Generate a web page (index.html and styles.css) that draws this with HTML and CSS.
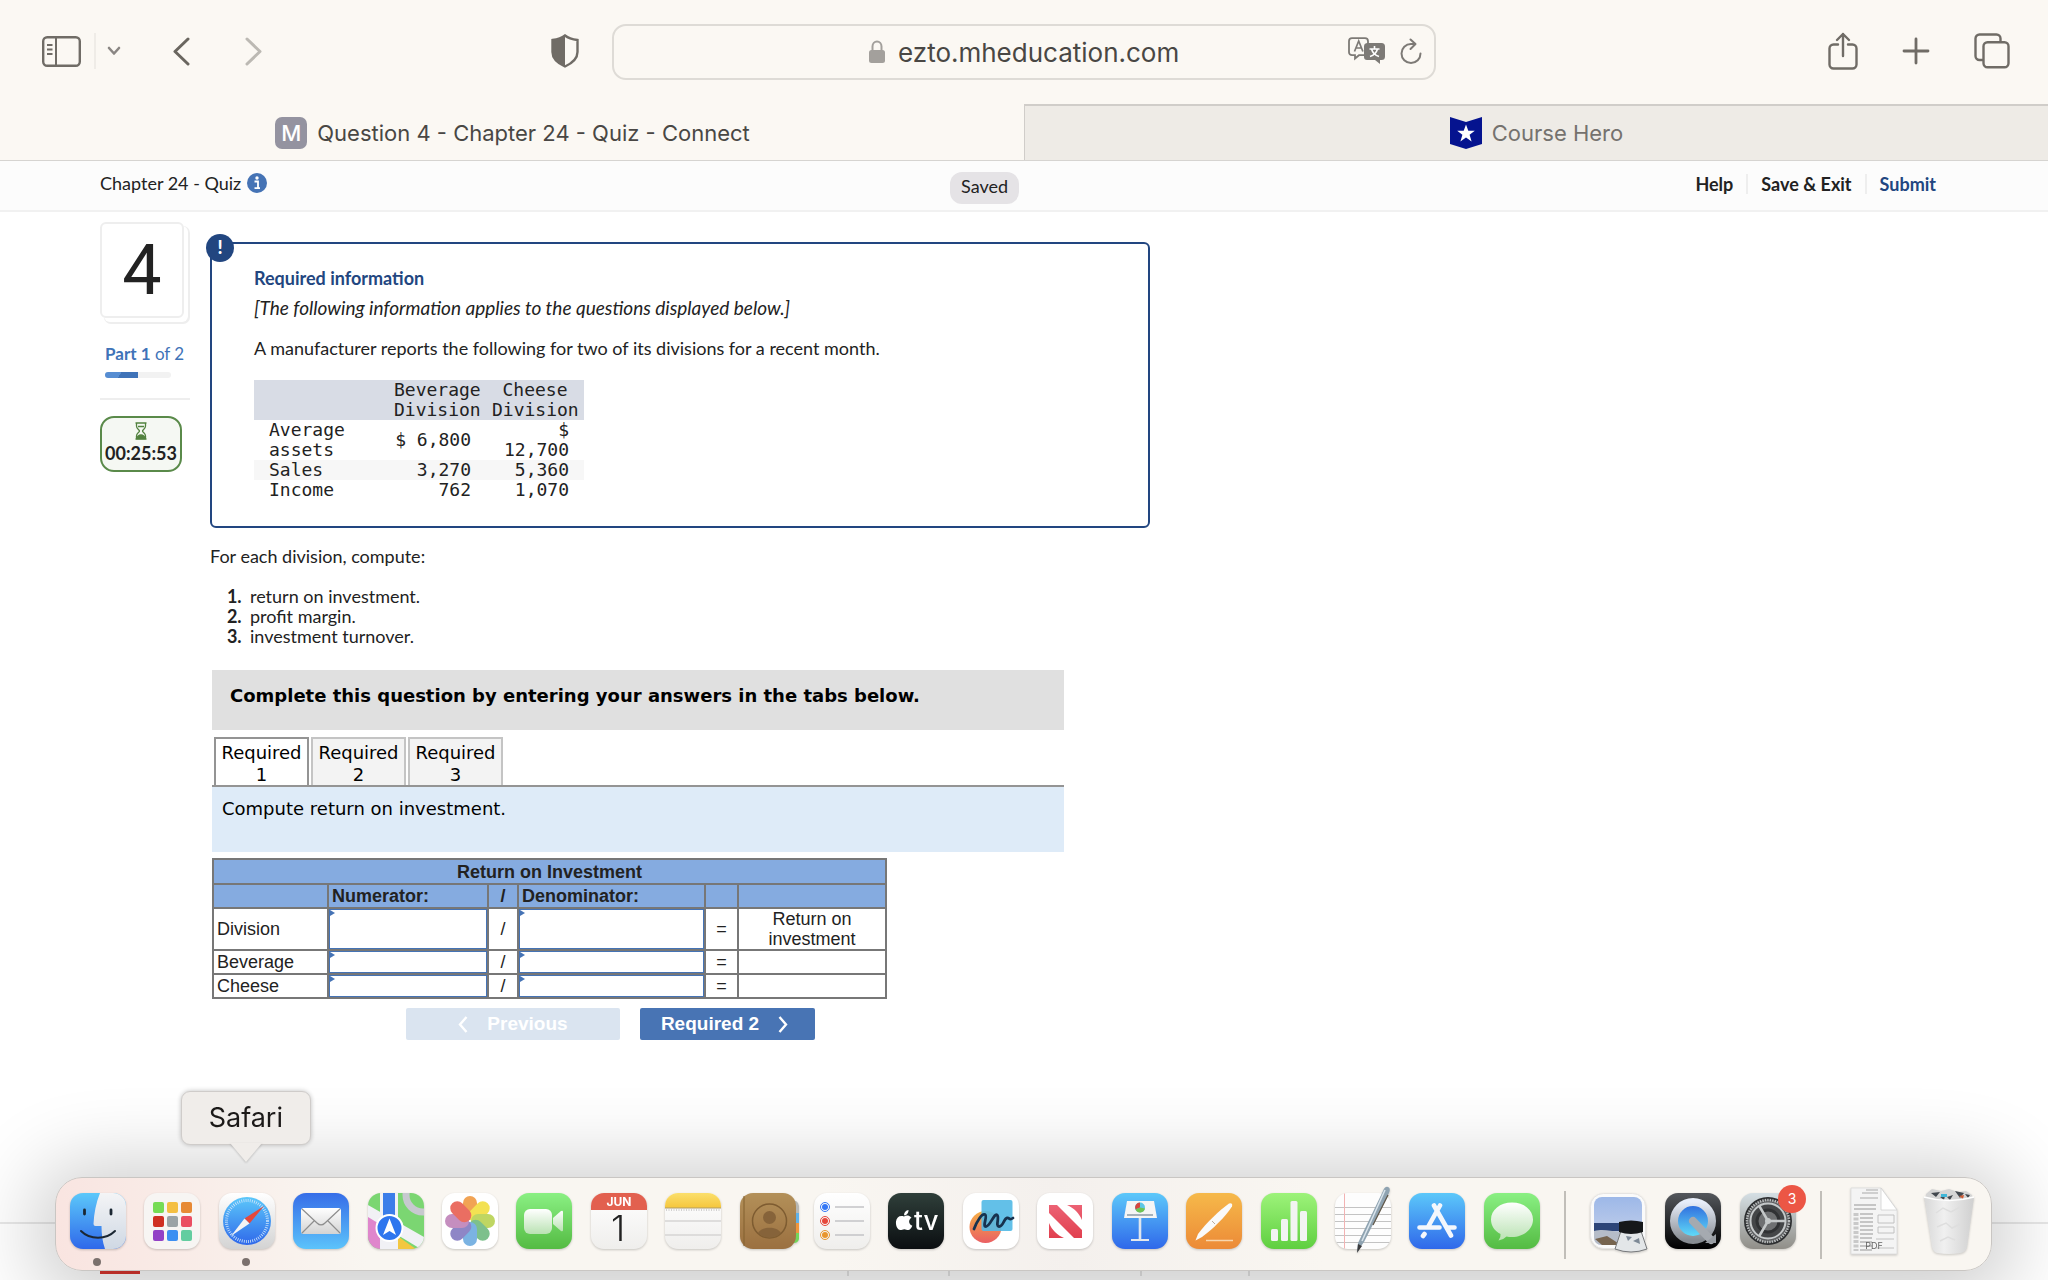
FILE: index.html
```
<!DOCTYPE html>
<html lang="en">
<head>
    <meta charset="UTF-8">
    <title>Question 4 - Chapter 24 - Quiz - Connect</title>
    <meta name="viewport" content="width=device-width, initial-scale=1">
    <link rel="stylesheet" href="styles.css">
</head>
<body>

<!-- browser -->
<header class="browser">
    <div class="toolbar">
        <div class="tools tools_left">
            <button type="button" class="icon_btn" aria-label="Sidebar">
                <svg width="39" height="31" viewBox="0 0 39 31" fill="none" stroke="#706c66" stroke-width="2.4"><rect x="1.2" y="1.2" width="36.6" height="28.6" rx="4"/><path d="M14 1v29M5 9h5.500M5 13.500h5.500M5 18h5.500" stroke-width="2"/></svg>
            </button>
            <span class="tool_line"></span>
            <button type="button" class="icon_btn" aria-label="Tab groups">
                <svg width="14" height="10" viewBox="0 0 14 10" fill="none" stroke="#8a8683" stroke-width="2.600" stroke-linecap="round" stroke-linejoin="round"><path d="M2 2l5 5.500L12 2"/></svg>
            </button>
            <button type="button" class="icon_btn back" aria-label="Back">
                <svg width="17" height="29" viewBox="0 0 17 29" fill="none" stroke="#6a665f" stroke-width="3" stroke-linecap="round" stroke-linejoin="round"><path d="M15 2L2 14.500L15 27"/></svg>
            </button>
            <button type="button" class="icon_btn forward" aria-label="Forward">
                <svg width="17" height="29" viewBox="0 0 17 29" fill="none" stroke="#bcb9b3" stroke-width="3" stroke-linecap="round" stroke-linejoin="round"><path d="M2 2l13 12.500L2 27"/></svg>
            </button>
            <button type="button" class="icon_btn shield" aria-label="Privacy report">
                <svg width="28" height="34" viewBox="0 0 28 34"><path d="M14 1.500C17 4 22 5.500 26.500 6v12c0 7-6 11.500-12.500 14.500C7.500 29.500 1.500 25 1.500 18V6C6 5.500 11 4 14 1.500z" fill="none" stroke="#706c66" stroke-width="2.400"/><path d="M14 1.500v31C7.500 29.500 1.500 25 1.500 18V6C6 5.500 11 4 14 1.500z" fill="#706c66"/></svg>
            </button>
        </div>
        <div class="url">
            <div class="url_field">
                <svg width="18" height="24" viewBox="0 0 18 24"><rect x="1" y="10" width="16" height="13" rx="2.500" fill="#a3a09c"/><path d="M4.500 11V6.500a4.500 5 0 0 1 9 0V11" fill="none" stroke="#a3a09c" stroke-width="2"/></svg>
                <input type="text" aria-label="Address" value="ezto.mheducation.com">
            </div>
            <div class="url_icons">
                <button type="button" class="icon_btn" aria-label="Translate">
                    <svg width="38" height="28" viewBox="0 0 38 28"><path d="M4 1.200h13a3 3 0 0 1 3 3v11a3 3 0 0 1-3 3h-6l-4 3.300v-3.300H4a3 3 0 0 1-3-3v-11a3 3 0 0 1 3-3z" fill="none" stroke="#7d7a76" stroke-width="1.800"/><path d="M6.500 14.500L10.700 4l4.200 10.500M8 11h5.500" fill="none" stroke="#7d7a76" stroke-width="1.700"/><path d="M19 6h14.500a3.500 3.500 0 0 1 3.500 3.500v10a3.500 3.500 0 0 1-3.500 3.500H32v4l-5-4h-8a3 3 0 0 1-3-3V9.500A3.500 3.500 0 0 1 19 6z" fill="#7d7a76"/><path d="M21.500 12h10M26.500 9v3M29.500 12c-1 3.500-4 6.500-7.500 7.500M23.500 12c1 3.500 4 6.500 7.500 7.500" fill="none" stroke="#fff" stroke-width="1.600"/></svg>
                </button>
                <button type="button" class="icon_btn" aria-label="Reload">
                    <svg width="22" height="26" viewBox="0 0 22 26" fill="none" stroke="#7d7a76" stroke-width="2" stroke-linecap="round" stroke-linejoin="round"><path d="M15 6H11a9.500 9.500 0 1 0 9.500 9.500M10.500 1.500L15.500 6L10.500 11"/></svg>
                </button>
            </div>
        </div>
        <div class="tools tools_right">
            <button type="button" class="icon_btn" aria-label="Share">
                <svg width="30" height="38" viewBox="0 0 30 38" fill="none" stroke="#706c66" stroke-width="2.400" stroke-linecap="round" stroke-linejoin="round"><path d="M10 12.500H5.500A4 4 0 0 0 1.500 16.500V32.500a4 4 0 0 0 4 4h19a4 4 0 0 0 4-4v-16a4 4 0 0 0-4-4H20M15 24V2M9 8l6-6l6 6"/></svg>
            </button>
            <button type="button" class="icon_btn" aria-label="New tab">
                <svg width="28" height="28" viewBox="0 0 28 28" fill="none" stroke="#706c66" stroke-width="2.800" stroke-linecap="round"><path d="M14 2v24M2 14h24"/></svg>
            </button>
            <button type="button" class="icon_btn" aria-label="Tab overview">
                <svg width="36" height="36" viewBox="0 0 36 36" fill="none" stroke="#706c66" stroke-width="2.400"><path d="M9 27H5.500a4 4 0 0 1-4-4V5.500a4 4 0 0 1 4-4H22.500a4 4 0 0 1 4 4V9"/><rect x="9.500" y="9.200" width="25" height="25" rx="4"/></svg>
            </button>
        </div>
    </div>
    <nav class="browser_tabs">
        <a href="#" class="browser_tab active"><span class="m_icon">M</span>Question 4 - Chapter 24 - Quiz - Connect</a>
        <a href="#" class="browser_tab">
            <svg width="32" height="32" viewBox="0 0 32 32"><path d="M0 0l16 5L32 0v27l-16 5l-16-5z" fill="#05138f"/><path d="M16 7.500l2.300 6.300h6.500l-5.200 4l2 6.600L16 20.500l-5.600 3.900l2-6.600l-5.200-4h6.500z" fill="#fff"/></svg>Course Hero</a>
    </nav>
</header>

<!-- quiz -->
<div class="quiz_header">
    <div class="quiz_name">Chapter 24 - Quiz
        <svg width="20" height="20" viewBox="0 0 20 20"><circle cx="10" cy="10" r="10" fill="#4573b5"/><circle cx="10" cy="5" r="1.700" fill="#fff"/><path d="M7.500 8.500h3.500v6.500M7.500 15.200h5.500" fill="none" stroke="#fff" stroke-width="1.800"/></svg>
    </div>
    <span class="saved">Saved</span>
    <nav class="quiz_links">
        <a href="#">Help</a>
        <a href="#">Save &amp; Exit</a>
        <a href="#" class="submit">Submit</a>
    </nav>
</div>

<main>
    <aside>
        <div class="number">4</div>
        <div class="part"><b>Part 1</b> of 2</div>
        <div class="progress"><div class="progress_done"></div></div>
        <div class="timer">
            <svg width="12" height="18" viewBox="0 0 12 18" fill="none" stroke="#52823f" stroke-width="1.300"><path d="M.5 1h11M.5 17h11M1.500 1v3c0 3 3 3.500 3 5s-3 2-3 5v3M10.500 1v3c0 3-3 3.500-3 5s3 2 3 5v3M3 4.500h6"/><path d="M2 16.500c0-2 2-3.500 4-3.500s4 1.500 4 3.500z" fill="#52823f"/></svg>
            <b>00:25:53</b>
        </div>
    </aside>

    <article>
        <section class="required_info">
            <span class="alert">!</span>
            <h2>Required information</h2>
            <p class="applies"><i>[The following information applies to the questions displayed below.]</i></p>
            <p class="reports">A manufacturer reports the following for two of its divisions for a recent month.</p>
            <table class="divisions">
                <thead>
                <tr><th></th><th>Beverage Division</th><th>Cheese Division</th></tr>
                </thead>
                <tbody>
                <tr><td>Average assets</td><td>$ 6,800</td><td>$ 12,700</td></tr>
                <tr class="shade"><td>Sales</td><td>3,270</td><td>5,360</td></tr>
                <tr><td>Income</td><td>762</td><td>1,070</td></tr>
                </tbody>
            </table>
        </section>

        <p class="compute">For each division, compute:</p>
        <ol>
            <li>return on investment.</li>
            <li>profit margin.</li>
            <li>investment turnover.</li>
        </ol>

        <section class="worksheet">
            <div class="instruction">Complete this question by entering your answers in the tabs below.</div>
            <div class="tabs">
                <button type="button" class="tab active">Required 1</button>
                <button type="button" class="tab">Required 2</button>
                <button type="button" class="tab">Required 3</button>
            </div>
            <div class="task">Compute return on investment.</div>

            <table class="answers">
                <colgroup>
                    <col class="col_name"><col class="col_num"><col class="col_slash"><col class="col_den"><col class="col_eq"><col class="col_result">
                </colgroup>
                <thead>
                <tr class="title"><th colspan="6" class="center">Return on Investment</th></tr>
                <tr><th></th><th>Numerator:</th><th class="center">/</th><th>Denominator:</th><th></th><th></th></tr>
                </thead>
                <tbody>
                <tr class="tall">
                    <td>Division</td>
                    <td class="entry"><input type="text" aria-label="Division numerator"></td>
                    <td class="center">/</td>
                    <td class="entry"><input type="text" aria-label="Division denominator"></td>
                    <td class="center">=</td>
                    <td class="center">Return on investment</td>
                </tr>
                <tr>
                    <td>Beverage</td>
                    <td class="entry"><input type="text" aria-label="Beverage numerator"></td>
                    <td class="center">/</td>
                    <td class="entry"><input type="text" aria-label="Beverage denominator"></td>
                    <td class="center">=</td>
                    <td></td>
                </tr>
                <tr>
                    <td>Cheese</td>
                    <td class="entry"><input type="text" aria-label="Cheese numerator"></td>
                    <td class="center">/</td>
                    <td class="entry"><input type="text" aria-label="Cheese denominator"></td>
                    <td class="center">=</td>
                    <td></td>
                </tr>
                </tbody>
            </table>

            <div class="pager">
                <button type="button" class="previous" disabled>
                    <svg width="10" height="17" viewBox="0 0 10 17" fill="none" stroke="#fff" stroke-width="2.400"><path d="M8.500 1L2 8.500L8.500 16"/></svg>Previous</button>
                <button type="button" class="next">Required 2
                    <svg width="10" height="17" viewBox="0 0 10 17" fill="none" stroke="#fff" stroke-width="2.400"><path d="M1.500 1L8 8.500L1.500 16"/></svg></button>
            </div>
        </section>
    </article>
</main>

<footer>
    <div class="logo"></div>
    <span class="w707"></span><span class="w100"></span><span class="w192"></span><span class="w107"></span>
</footer>

<!-- dock -->
<svg class="defs" width="0" height="0">
    <defs>
        <linearGradient id="blue" x2="0" y2="1"><stop stop-color="#5cc8fa"/><stop offset="1" stop-color="#2f68ea"/></linearGradient>
        <linearGradient id="blueUp" x2="0" y2="1"><stop stop-color="#366de8"/><stop offset="1" stop-color="#5cc3fb"/></linearGradient>
        <linearGradient id="green" x2="0" y2="1"><stop stop-color="#8af083"/><stop offset="1" stop-color="#54bb43"/></linearGradient>
        <linearGradient id="lime" x2="0" y2="1"><stop stop-color="#9df37a"/><stop offset="1" stop-color="#5fcf40"/></linearGradient>
        <linearGradient id="white" x2="0" y2="1"><stop stop-color="#fff"/><stop offset="1" stop-color="#efeeec"/></linearGradient>
        <linearGradient id="silver" x2="0" y2="1"><stop stop-color="#fff"/><stop offset="1" stop-color="#d3d3d3"/></linearGradient>
        <linearGradient id="glass" x2="0" y2="1"><stop stop-color="#fff"/><stop offset="1" stop-color="#b9e2b2"/></linearGradient>
        <linearGradient id="face" x2="0" y2="1"><stop stop-color="#f4f4f6"/><stop offset="1" stop-color="#cfd8e4"/></linearGradient>
        <linearGradient id="yellow" x2="0" y2="1"><stop stop-color="#fbdf6c"/><stop offset="1" stop-color="#f5c63c"/></linearGradient>
        <linearGradient id="orange" x2="0" y2="1"><stop stop-color="#f6b94a"/><stop offset="1" stop-color="#ec8a37"/></linearGradient>
        <linearGradient id="brown" x2="0" y2="1"><stop stop-color="#b39059"/><stop offset="1" stop-color="#9b7040"/></linearGradient>
        <linearGradient id="black" x2="0" y2="1"><stop stop-color="#2f3f3a"/><stop offset="1" stop-color="#0b0e11"/></linearGradient>
        <linearGradient id="dark" x2="0" y2="1"><stop stop-color="#54575c"/><stop offset="1" stop-color="#000"/></linearGradient>
        <linearGradient id="gray" x2="0" y2="1"><stop stop-color="#d5dfe4"/><stop offset="1" stop-color="#908e88"/></linearGradient>
        <linearGradient id="coral" x2="0" y2="1"><stop stop-color="#f5b046"/><stop offset="1" stop-color="#ea5f63"/></linearGradient>
        <linearGradient id="red" x2="0" y2="1"><stop stop-color="#ec6274"/><stop offset="1" stop-color="#e1404f"/></linearGradient>
        <linearGradient id="ring" x2="0" y2="1"><stop stop-color="#e8eefa"/><stop offset="1" stop-color="#878c92"/></linearGradient>
        <linearGradient id="aqua" x2="0" y2="1"><stop stop-color="#2b63dc"/><stop offset="1" stop-color="#66e8fa"/></linearGradient>
        <linearGradient id="sky" x2="0" y2="1"><stop stop-color="#9db8e8"/><stop offset="1" stop-color="#c9d3ea"/></linearGradient>
        <linearGradient id="bin" x2="1" y2="0"><stop stop-color="#d8d8d8"/><stop offset=".4" stop-color="#f2f2f2"/><stop offset="1" stop-color="#cfcfcf"/></linearGradient>
        <clipPath id="app"><rect width="56" height="56" rx="13"/></clipPath>
    </defs>
</svg>

<nav class="dock" aria-label="Dock">
    <div class="apps apps_main">
        <a href="#" class="app running" aria-label="Finder">
            <svg viewBox="0 0 56 56"><g clip-path="url(#app)"><rect width="56" height="56" fill="url(#blue)"/><path d="M30 0C26 10 24 20 23.500 31q0 2 2 2h6c0 8 1 16 3.500 23h21V0z" fill="url(#face)"/></g><path d="M14.500 17v4M41 17v4" stroke="#1b2733" stroke-width="2.800" stroke-linecap="round"/><path d="M11 38c9 9 25 9 34 0" fill="none" stroke="#1b2733" stroke-width="2" stroke-linecap="round"/></svg>
        </a>
        <a href="#" class="app" aria-label="Launchpad">
            <svg viewBox="0 0 56 56"><rect width="56" height="56" rx="13" fill="#f7f5f3"/><rect x="9" y="9" width="11" height="11" rx="2" fill="#76dc55"/><rect x="23" y="9" width="11" height="11" rx="2" fill="#f4bf42"/><rect x="37" y="9" width="11" height="11" rx="2" fill="#e78a35"/><rect x="9" y="23" width="11" height="11" rx="2" fill="#cf3023"/><rect x="23" y="23" width="11" height="11" rx="2" fill="#9aa3a6"/><rect x="37" y="23" width="11" height="11" rx="2" fill="#ea4e62"/><rect x="9" y="37" width="11" height="11" rx="2" fill="#9241c6"/><rect x="23" y="37" width="11" height="11" rx="2" fill="#3d8ff2"/><rect x="37" y="37" width="11" height="11" rx="2" fill="#63cda0"/></svg>
        </a>
        <a href="#" class="app running" aria-label="Safari">
            <span class="tooltip">Safari</span>
            <svg viewBox="0 0 56 56"><rect width="56" height="56" rx="13" fill="url(#silver)"/><circle cx="28" cy="28" r="24" fill="url(#blue)"/><circle cx="28" cy="28" r="20.500" fill="none" stroke="#cfe5fb" stroke-width="3" stroke-dasharray=".8 1.350"/><path d="M45 13L25.500 25.500l5 5z" fill="#e5483c"/><path d="M12 43l13.500-17.500l5 5z" fill="#f4f4f4"/></svg>
        </a>
        <a href="#" class="app" aria-label="Mail">
            <svg viewBox="0 0 56 56"><rect width="56" height="56" rx="13" fill="url(#blueUp)"/><rect x="8" y="15" width="40" height="26" rx="2.500" fill="url(#silver)"/><path d="M9 16l15 14q4 4 8 0l15-14M9 40l12-12M47 40L35 28" fill="none" stroke="#8e8e8e" stroke-width="1.200"/></svg>
        </a>
        <a href="#" class="app" aria-label="Maps">
            <svg viewBox="0 0 56 56"><g clip-path="url(#app)"><rect width="56" height="56" fill="#7bd672"/><path d="M0 20l13 10v26H0z" fill="#df86cc"/><path d="M0 12l56 32v14L0 24z" fill="#f1f1f5"/><path d="M28 56V42l20 14z" fill="#f3c740"/><rect x="12" width="18" height="56" fill="#f1f1f5"/><rect x="15" width="12" height="34" fill="#3b7de9"/><circle cx="55" cy="2" r="17" fill="none" stroke="#c7c9cf" stroke-width="7"/></g><circle cx="21.500" cy="35" r="13" fill="#2f76ee" stroke="#fff" stroke-width="2"/><path d="M21.500 25.500L28 42l-6.500-4l-6.500 4z" fill="#fff"/></svg>
        </a>
        <a href="#" class="app" aria-label="Photos">
            <svg viewBox="0 0 56 56"><rect width="56" height="56" rx="13" fill="#fff"/><g opacity=".85"><rect x="21" y="3" width="14" height="24" rx="7" fill="#ef9437"/><rect x="21" y="3" width="14" height="24" rx="7" fill="#f2dc35" transform="rotate(45 28 28)"/><rect x="21" y="3" width="14" height="24" rx="7" fill="#b5d047" transform="rotate(90 28 28)"/><rect x="21" y="3" width="14" height="24" rx="7" fill="#67b679" transform="rotate(135 28 28)"/><rect x="21" y="3" width="14" height="24" rx="7" fill="#64a6dd" transform="rotate(180 28 28)"/><rect x="21" y="3" width="14" height="24" rx="7" fill="#7b72bd" transform="rotate(225 28 28)"/><rect x="21" y="3" width="14" height="24" rx="7" fill="#bb7bb5" transform="rotate(270 28 28)"/><rect x="21" y="3" width="14" height="24" rx="7" fill="#e75547" transform="rotate(315 28 28)"/></g></svg>
        </a>
        <a href="#" class="app" aria-label="FaceTime">
            <svg viewBox="0 0 56 56"><rect width="56" height="56" rx="13" fill="url(#green)"/><rect x="8" y="16" width="28" height="25" rx="6" fill="url(#glass)"/><path d="M37 25l8-7q2-1 2 1v18q0 2-2 1l-8-7z" fill="url(#glass)"/></svg>
        </a>
        <a href="#" class="app" aria-label="Calendar">
            <svg viewBox="0 0 56 56"><g clip-path="url(#app)"><rect width="56" height="56" fill="url(#white)"/><rect width="56" height="17" fill="#e2604f"/></g><text x="28" y="13" class="cal_month">JUN</text><text x="27" y="48" class="cal_day">1</text></svg>
        </a>
        <a href="#" class="app" aria-label="Notes">
            <svg viewBox="0 0 56 56"><g clip-path="url(#app)"><rect width="56" height="56" fill="url(#white)"/><rect width="56" height="15" fill="url(#yellow)"/><path d="M0 15h56" stroke="#b09c66"/><path d="M1 17h54" stroke="#aaa" stroke-dasharray="1 1.500"/><path d="M0 28h56M0 42h56" stroke="#d6d5d3" stroke-width="1.500"/></g></svg>
        </a>
        <a href="#" class="app" aria-label="Contacts">
            <svg viewBox="0 0 56 56"><path d="M52 8h4q3 2 3 5v7h-7z" fill="#b8b8b4"/><path d="M52 20h7v10h-7z" fill="#5fb2ea"/><path d="M52 30h7v10h-7z" fill="#f0953b"/><path d="M52 40h7v6q-1 4-5 4z" fill="#72d65c"/><rect width="56" height="56" rx="13" fill="url(#brown)"/><path d="M4 3v50" stroke="#82602f" stroke-width="1"/><g stroke="#7e5c31" fill="none" stroke-width="1.500"><circle cx="29.500" cy="28" r="17"/></g><circle cx="29.500" cy="24.500" r="6.500" fill="#86633a"/><path d="M18 40c4-7 19-7 23 0c-6 6-17 6-23 0z" fill="#86633a"/></svg>
        </a>
        <a href="#" class="app" aria-label="Reminders">
            <svg viewBox="0 0 56 56"><rect width="56" height="56" rx="13" fill="url(#white)"/><g fill="none" stroke-width="1"><circle cx="11" cy="14" r="4.500" stroke="#3478f6"/><circle cx="11" cy="28" r="4.500" stroke="#e6483c"/><circle cx="11" cy="42" r="4.500" stroke="#e8962e"/></g><circle cx="11" cy="14" r="3" fill="#3478f6"/><circle cx="11" cy="28" r="3" fill="#e6483c"/><circle cx="11" cy="42" r="3" fill="#e8962e"/><path d="M21 14h29M21 28h29M21 42h29" stroke="#c4c4c6" stroke-width="1.600"/></svg>
        </a>
        <a href="#" class="app" aria-label="TV">
            <svg viewBox="0 0 56 56"><rect width="56" height="56" rx="13" fill="url(#black)"/><path d="M16 23.500c2-1.300 5-1.500 7.500 1.200c-3.500 2-3 6.500 .8 8c-1 2.500-2.500 4.300-4 4.300c-1.500 0-2.500-.8-4-.8s-2.500 .8-4 .8C9.500 37 7.500 32.500 8 28.500c.5-4.500 4-6.500 8-5zM16 22.300c0-3 1.800-5 4.500-5.300c.2 3-1.800 5.300-4.500 5.300z" fill="#fff"/><text x="26" y="37" class="tv_text">tv</text></svg>
        </a>
        <a href="#" class="app" aria-label="Freeform">
            <svg viewBox="0 0 56 56"><rect width="56" height="56" rx="13" fill="#fff"/><circle cx="22.500" cy="34" r="16" fill="url(#coral)"/><rect x="18.500" y="7" width="31" height="31" rx="2" fill="#52b9e6" opacity=".9"/><path d="M11 36c3-8 8-16 11-14.500s-3 12 1 12S31 20 34 22s-2 11 2 11.500s5-8 8-8.500s2 3 6 0" fill="none" stroke="#17324f" stroke-width="2.800" stroke-linecap="round"/></svg>
        </a>
        <a href="#" class="app" aria-label="News">
            <svg viewBox="0 0 56 56"><rect width="56" height="56" rx="13" fill="#fff"/><path d="M12 12h8l25 25v8h-8L12 20zM30 12h15v15C42 20 37 15 30 12zM12 30c3 7 8 12 15 15H12z" fill="url(#red)"/></svg>
        </a>
        <a href="#" class="app" aria-label="Keynote">
            <svg viewBox="0 0 56 56"><rect width="56" height="56" rx="13" fill="url(#blue)"/><path d="M15 8h27l3 17H12z" fill="#f5f5f5"/><path d="M15 22h26" stroke="#8b9aa6" stroke-width="1.500"/><circle cx="28" cy="14.500" r="5" fill="#5ec7e6"/><path d="M28 14.500V9.500a5 5 0 0 0-4.500 7z" fill="#d8453f"/><path d="M28 14.500l5 1a5 5 0 0 1-9.500 1z" fill="#71c452"/><path d="M28 25v21" stroke="#dfe6ee" stroke-width="2.600"/><path d="M19 47h18" stroke="#e4e8ee" stroke-width="2"/></svg>
        </a>
        <a href="#" class="app" aria-label="Pages">
            <svg viewBox="0 0 56 56"><rect width="56" height="56" rx="13" fill="url(#orange)"/><path d="M9.500 47.500L12 41C21 29 34 17 43 10.500q4-1 3 3C39 24 28 35 16 44z" fill="#fafafa"/><path d="M26 28l3 3" stroke="#b8aca0"/><path d="M20 47.500h27" stroke="#f8d6ad" stroke-width="1.500"/></svg>
        </a>
        <a href="#" class="app" aria-label="Numbers">
            <svg viewBox="0 0 56 56"><rect width="56" height="56" rx="13" fill="url(#lime)"/><g fill="#f2f4f2"><rect x="10" y="36" width="7" height="12" rx="1.500"/><rect x="20" y="26" width="7" height="22" rx="1.500"/><rect x="29.500" y="8" width="7" height="40" rx="1.500"/><rect x="39" y="18" width="7" height="30" rx="1.500"/></g></svg>
        </a>
        <a href="#" class="app" aria-label="TextEdit">
            <svg viewBox="0 0 56 56"><g clip-path="url(#app)"><rect width="56" height="56" fill="#fdfdfd"/><path d="M0 14.500h56M0 21.500h56M0 28.500h56M0 35.500h56M0 42.500h56M0 49.500h56" stroke="#c3c3c3"/><path d="M9.500 0v56" stroke="#f2b3b3"/></g><path d="M22 59l1-9L48-2q2-5 5-4t1 6L29 49z" fill="#8fa3b1"/><path d="M50-3L27 48" stroke="#d9e4ec" stroke-width="1.500"/><path d="M53 2L38 32" stroke="#5d5446" stroke-width="1.300"/><path d="M22 60l1-9l4 2z" fill="#3a3a3c"/></svg>
        </a>
        <a href="#" class="app" aria-label="App Store">
            <svg viewBox="0 0 56 56"><rect width="56" height="56" rx="13" fill="url(#blue)"/><path d="M31 12.500L19 34M25 12.500l17 30M10.500 34.500h20M39 34.500h6.500M15.500 41l-1.500 2" stroke="#f4f7fc" stroke-width="4.600" stroke-linecap="round"/></svg>
        </a>
        <a href="#" class="app" aria-label="Messages">
            <svg viewBox="0 0 56 56"><rect width="56" height="56" rx="13" fill="url(#green)"/><path d="M28 9.500c12 0 21 7.500 21 17S40 44 28 44q-3 0-5.500-.6Q19 47 14.500 47.500q2.500-3 2-6.500C10.500 38 7 32.500 7 26.500c0-9.500 9-17 21-17z" fill="url(#glass)"/></svg>
        </a>
    </div>
    <span class="dock_line"></span>
    <div class="apps">
        <a href="#" class="app" aria-label="Preview">
            <svg viewBox="0 0 56 56"><rect x=".5" y=".5" width="55" height="55" rx="13" fill="#fafafa" stroke="#e6e4e2"/><rect x="4" y="4" width="48" height="48" rx="8" fill="url(#sky)"/><path d="M4 30h48v8H4z" fill="#2d4578"/><path d="M4 38c12-3 20 2 28 0v14H12q-8 0-8-8z" fill="#b5bcc8"/><path d="M5 46l12-3l14 9H12z" fill="#76644f"/><path d="M31 38h20l6 18q-16 6-32 0z" fill="#e3e6e8" stroke="#77797c"/><path d="M36 43l6 1l-4 4zM43 48l6-3l1 6z" fill="#7d8996"/><path d="M29 29q12-3 24 0v10q-12 4-24 0z" fill="#16181a"/></svg>
        </a>
        <a href="#" class="app" aria-label="QuickTime Player">
            <svg viewBox="0 0 56 56"><rect width="56" height="56" rx="13" fill="url(#dark)"/><circle cx="28" cy="28" r="19" fill="url(#aqua)" stroke="url(#ring)" stroke-width="8"/><path d="M28 28L46 47" stroke="#a5aab0" stroke-width="8" stroke-linecap="round"/><path d="M40 50h11v-9" fill="#989da3"/></svg>
        </a>
        <a href="#" class="app" aria-label="System Settings, 3 notifications">
            <svg viewBox="0 0 56 56"><rect width="56" height="56" rx="13" fill="url(#gray)"/><circle cx="28" cy="28" r="24" fill="#2d2f31"/><circle cx="28" cy="28" r="21" fill="#5c5e60" stroke="#b9bcbd" stroke-width="2.500" stroke-dasharray="1.500 1"/><circle cx="28" cy="28" r="17.500" fill="#444648" stroke="#c4c8c9" stroke-width="2"/><circle cx="28" cy="28" r="11" fill="#6e7072" stroke="#303234" stroke-width="3"/><path d="M28 28h18M28 28L19 12.500M28 28L19 43.500" stroke="#c4c8c9" stroke-width="2.500"/><circle cx="28" cy="28" r="3" fill="#c4c8c9"/></svg>
            <span class="badge">3</span>
        </a>
    </div>
    <span class="dock_line"></span>
    <div class="apps">
        <a href="#" class="app" aria-label="PDF document">
            <svg viewBox="0 0 56 56"><path d="M5-5h30l16 22v44H5z" fill="#f4f4f4" stroke="#dcdcdc" stroke-width=".8"/><path d="M8 12h22M8 16h22M14 21h13M14 25h13M14 29h13M14 33h13M14 37h13M14 41h13M14 45h12M14 49h12M14 53h12M14 57h12" stroke="#b5b5b5" stroke-width="1.500"/><path d="M10 20v38" stroke="#c9c9c9" stroke-width="5" stroke-dasharray="3 1.500"/><path d="M16 0h16M20-3h12M14 5h18" stroke="#aaa" stroke-width="1.200"/><path d="M32 22h16v8H32zM32 34h16v6H32zM30 46h18M30 55h18" fill="none" stroke="#bbb" stroke-width=".9"/><path d="M35-5l16 22H35z" fill="#fff" stroke="#d0d0d0" stroke-width=".8"/><text x="28" y="56" class="pdf_text">PDF</text></svg>
        </a>
        <a href="#" class="app" aria-label="Trash">
            <svg viewBox="0 0 56 56"><path d="M5 1l6-5l9 2l8-2l9 3l8-1l6 4v6H5z" fill="#d5d5d5"/><path d="M10 0l5 4l4-5zM34-2l5 7l4-5zM26 4l3 3l3-5zM19 4l4 3l1-4zM44 1l3 4l2-3z" fill="#42484f"/><path d="M20 1h6v3h-6z" fill="#3fb6d8"/><path d="M38 3l4 3l1-4z" fill="#cf5c35"/><path d="M3 4q25 7 50 0l-7 50q-1 5-6 6q-12 2-24 0q-4-1-5-6z" fill="url(#bin)" opacity=".93"/><path d="M3 4q25 7 50 0" fill="none" stroke="#fff" stroke-width="1.500"/><path d="M15 20l7-5l8 4l9-5M16 34l9-4l6 5l8-4M19 48l8-4l7 3" fill="none" stroke="#dedede" stroke-width="1.500"/></svg>
        </a>
    </div>
</nav>
</body>
</html>
```
FILE: styles.css
```
* {
    box-sizing: border-box;
}

body {
    margin: 0;
    min-height: 100vh;
    display: flex;
    flex-direction: column;
    background-color: #fff;
    color: #222;
    font: 18px/20px Lato, sans-serif;
    overflow-x: hidden;
}

svg {
    display: block;
}

button, input {
    font: inherit;
    color: inherit;
    margin: 0;
}

a {
    color: inherit;
    text-decoration: none;
}

/* browser */
.browser {
    font-family: Inter, sans-serif;
    color: #494744;
    background-color: #fbf8f3;
}

.toolbar {
    height: 104px;
    display: grid;
    grid-template-columns: 1fr 824px 1fr;
    align-items: center;
}

.tools {
    display: flex;
    align-items: center;
    padding-bottom: 2px;
}

.tools_left {
    padding-left: 42px;
}

.tools_right {
    justify-content: flex-end;
    gap: 44px;
    padding-right: 38px;
}

.icon_btn {
    border: 0;
    padding: 0;
    background: none;
}

.tool_line {
    width: 2px;
    height: 36px;
    margin: 0 11px 0 13px;
    background-color: #efece7;
}

.back {
    margin-left: 52px;
}

.forward {
    margin-left: 55px;
}

.shield {
    margin: 0 33px 0 auto;
}

.url {
    height: 56px;
    padding: 0 12px;
    border: 2px solid #dedbd6;
    border-radius: 14px;
    display: grid;
    grid-template-columns: 1fr auto 1fr;
    align-items: center;
}

.url_field {
    grid-column: 2;
    display: flex;
    align-items: center;
    gap: 12px;
}

.url_field input {
    width: 282px;
    padding: 2px 0 0;
    border: 0;
    background: none;
    font-size: 26px;
    line-height: 32px;
}

.url_icons {
    display: flex;
    align-items: center;
    justify-content: flex-end;
    gap: 14px;
    padding-bottom: 2px;
}

.browser_tabs {
    display: flex;
    height: 57px;
    border-bottom: 1px solid #d6d4d1;
    font-size: 22px;
}

.browser_tab {
    flex: 1;
    display: flex;
    align-items: center;
    justify-content: center;
    gap: 10px;
    color: #75726e;
    background-color: #eeebe6;
    border-left: 1px solid #d0cdc9;
    border-top: 2px solid #d0cdc9;
}

.browser_tab.active {
    color: #494744;
    background: none;
    border-color: transparent;
}

.m_icon {
    width: 32px;
    height: 32px;
    border-radius: 7px;
    background-color: #9493a0;
    color: #fff;
    font-weight: 500;
    line-height: 32px;
    text-align: center;
}

/* quiz header */
.quiz_header {
    height: 51px;
    padding: 0 112px 0 100px;
    border-bottom: 2px solid #f1f1f1;
    background-color: #fcfcfc;
    display: grid;
    grid-template-columns: 850px auto 1fr;
    align-items: center;
}

.quiz_name {
    display: flex;
    gap: 6px;
    padding-bottom: 6px;
}

.saved {
    padding: 4px 11px 8px;
    border-radius: 12px;
    background-color: #e5e3e6;
    margin-bottom: -4px;
}

.quiz_links {
    display: flex;
    justify-content: flex-end;
    padding-bottom: 4px;
    font-weight: bold;
}

.quiz_links a + a {
    margin-left: 13px;
    padding-left: 13px;
    border-left: 2px solid #eee;
}

.submit {
    color: #224680;
}

/* question */
main {
    flex: 1;
    display: flex;
    gap: 20px;
    padding: 10px 100px 0;
}

aside {
    width: 90px;
}

.number {
    width: 84px;
    height: 96px;
    border: 2px solid #eee;
    border-radius: 6px;
    background-color: #fff;
    box-shadow: 4px 4px 0 #fff, 5px 5px 0 1px #eee;
    font-family: Roboto, sans-serif;
    font-size: 70px;
    line-height: 92px;
    text-align: center;
}

.part {
    margin: 26px 0 8px 5px;
    color: #3f73b8;
    font-size: 17px;
}

.progress {
    width: 66px;
    height: 6px;
    margin-left: 5px;
    border-radius: 3px;
    background-color: #f2f2f2;
    overflow: hidden;
}

.progress_done {
    width: 50%;
    height: 6px;
    background: linear-gradient(125deg, #568dd2 45%, #3f73b8 45%);
}

.timer {
    position: relative;
    width: 82px;
    height: 56px;
    margin-top: 38px;
    padding-top: 4px;
    border: 2px solid #5a8a4a;
    border-radius: 14px;
    background-color: #f5f8f3;
    display: flex;
    flex-direction: column;
    align-items: center;
    gap: 3px;
}

.timer::before {
    content: "";
    position: absolute;
    top: -20px;
    left: -2px;
    width: 90px;
    height: 2px;
    background-color: #eee;
}

article {
    flex: 0 1 940px;
    padding-top: 20px;
}

.required_info {
    position: relative;
    padding: 24px 42px 26px;
    border: 2px solid #224680;
    border-radius: 6px;
}

.alert {
    position: absolute;
    top: -10px;
    left: -6px;
    width: 28px;
    height: 28px;
    border-radius: 50%;
    background-color: #224680;
    color: #fff;
    font-weight: 900;
    line-height: 26px;
    text-align: center;
}

h2 {
    margin: 0 0 10px;
    color: #224680;
    font-size: 18px;
}

.applies {
    margin: 0 0 20px;
    font-size: 19px;
}

.reports {
    margin: 0 0 22px;
}

.divisions {
    width: 330px;
    border-collapse: collapse;
    table-layout: fixed;
    font-family: "DejaVu Sans Mono", monospace;
}

.divisions th {
    padding: 0 6px;
    background-color: #d8dce5;
    font-weight: normal;
}

.divisions th:first-child {
    width: 134px;
}

.divisions td {
    padding: 0 15px 0 0;
    text-align: right;
}

.divisions td:first-child {
    padding: 0 20px 0 15px;
    text-align: left;
}

.shade {
    background-color: #f7f7f7;
}

.compute {
    margin: 18px 0 20px;
}

ol {
    margin: 0 0 24px;
    padding-left: 36px;
}

li {
    padding-left: 4px;
}

li::marker {
    font-weight: bold;
}

/* worksheet */
.worksheet {
    width: 852px;
    margin-left: 2px;
    color: #000;
    font-family: "DejaVu Sans", sans-serif;
}

.instruction {
    height: 60px;
    padding: 16px 18px;
    background-color: #e0e0e0;
    font-weight: bold;
}

.tabs {
    display: flex;
    gap: 2px;
    margin-top: 7px;
    padding-left: 2px;
    border-bottom: 2px solid #949494;
}

.tab {
    width: 95px;
    height: 48px;
    padding: 3px 4px 0;
    border: 2px solid #c4c4c4;
    border-bottom: 0;
    background-color: #f3f3f3;
    line-height: 22px;
}

.tab.active {
    border-color: #949494;
    background-color: #fff;
}

.task {
    height: 65px;
    padding: 12px 10px;
    background-color: #deebf8;
}

.answers {
    width: 675px;
    margin-top: 6px;
    border-collapse: collapse;
    table-layout: fixed;
    color: #222;
    font-family: "Liberation Sans", sans-serif;
}

.col_name {
    width: 115px;
}

.col_num {
    width: 160px;
}

.col_slash {
    width: 30px;
}

.col_den {
    width: 187px;
}

.col_eq {
    width: 33px;
}

.answers th, .answers td {
    height: 24px;
    padding: 0 3px;
    border: 2px solid #777;
    text-align: left;
}

.answers th {
    background-color: #85abe0;
}

.answers .title th {
    height: 25px;
}

.answers .center {
    text-align: center;
}

.answers .entry {
    position: relative;
    padding: 0;
}

.entry::before {
    content: "";
    position: absolute;
    top: 1px;
    left: 1px;
    border-left: 5px solid #4573b5;
    border-top: 3px solid transparent;
    border-bottom: 3px solid transparent;
}

.entry input {
    display: block;
    width: 100%;
    height: 22px;
    padding: 0 6px;
    border: 1px solid #4573b5;
    background: none;
}

.tall .entry input {
    height: 40px;
}

.pager {
    display: flex;
    gap: 20px;
    margin: 9px 0 0 194px;
    font-family: "Liberation Sans", sans-serif;
    font-weight: bold;
}

.pager button {
    display: flex;
    align-items: center;
    justify-content: center;
    gap: 19px;
    height: 32px;
    padding: 0;
    border: 0;
    border-radius: 2px;
    background-color: #4874b4;
    color: #fff;
    font-size: 19px;
}

.pager .previous {
    width: 214px;
    background-color: #dae4f0;
}

.pager .next {
    width: 175px;
    padding-right: 6px;
}

footer {
    height: 58px;
    padding-left: 100px;
    border-top: 2px solid #e8e8e8;
    display: flex;
}

.logo {
    width: 40px;
    height: 50px;
    background-color: #d8362e;
}

footer span {
    height: 52px;
    border-right: 2px solid #e4e4e4;
}

.w707 {
    width: 709px;
}

.w100 {
    width: 101px;
}

.w192 {
    width: 192px;
}

.w107 {
    width: 108px;
}

/* dock */
.defs {
    position: absolute;
}

.dock {
    position: fixed;
    left: 55px;
    right: 56px;
    bottom: 9px;
    height: 94px;
    padding: 15px 14px 0;
    border: 1px solid #c9c6c3;
    border-radius: 27px;
    background: linear-gradient(80deg, #f9e4e0, #f9f6f1 16%, #f9f6f1 40%, #f4f0ed 52%, #f9f6f1 65%);
    box-shadow: 0 8px 80px 20px rgba(0, 0, 0, .2);
    display: flex;
    gap: 24px;
    font-family: Inter, sans-serif;
}

.apps {
    display: flex;
    gap: 19px;
}

.apps_main {
    flex: 1;
    gap: 0;
    justify-content: space-between;
}

.app {
    position: relative;
    width: 56px;
    height: 56px;
}

.app svg {
    width: 56px;
    height: 56px;
    overflow: visible;
    filter: drop-shadow(0 1px 1px rgba(0, 0, 0, .2));
}

.running::after {
    content: "";
    position: absolute;
    top: 65px;
    left: 23px;
    width: 8px;
    height: 8px;
    border-radius: 50%;
    background-color: #7b706d;
}

.dock_line {
    width: 2px;
    height: 68px;
    margin-top: -2px;
    background-color: #c1beb9;
}

.tooltip {
    position: absolute;
    bottom: 104px;
    left: 50%;
    width: 130px;
    margin-left: -66px;
    border: 1px solid #cfccca;
    border-radius: 9px;
    background-color: #f0edea;
    box-shadow: 0 0 5px rgba(0, 0, 0, .25);
    color: #1c1a19;
    font-size: 27px;
    line-height: 52px;
    text-align: center;
}

.tooltip::after {
    content: "";
    position: absolute;
    top: 51px;
    left: 48px;
    border: 16px solid transparent;
    border-top: 19px solid #f0edea;
    border-bottom: 0;
    filter: drop-shadow(0 1px 1px rgba(0, 0, 0, .2));
}

.badge {
    position: absolute;
    top: -8px;
    right: -10px;
    width: 28px;
    height: 28px;
    border-radius: 50%;
    background-color: #ec5645;
    color: #fff;
    font-size: 14px;
    line-height: 28px;
    text-align: center;
}

.cal_month {
    font-size: 12px;
    font-weight: bold;
    fill: #fff;
    text-anchor: middle;
}

.cal_day {
    font-size: 36px;
    font-weight: 300;
    fill: #222;
    text-anchor: middle;
}

.tv_text {
    font-size: 26px;
    font-weight: 500;
    fill: #fff;
}

.pdf_text {
    font-size: 9px;
    fill: #666;
    text-anchor: middle;
}
```
